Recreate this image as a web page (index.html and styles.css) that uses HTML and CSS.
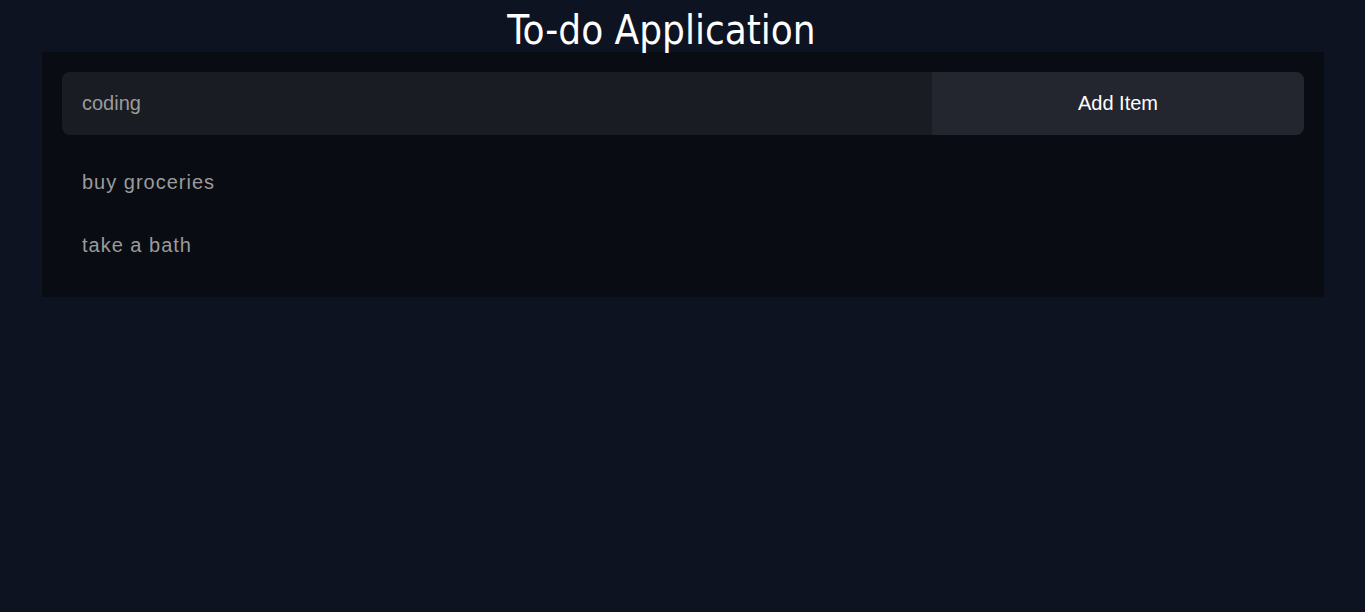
FILE: index.html
```html
<!DOCTYPE html>
<html>
<head>
<meta charset="utf-8">
<title>To-do Application</title>
<link rel="stylesheet" href="styles.css">
</head>
<body>
<h1 class="title">To-do Application</h1>
<main class="panel">
  <form class="add-row">
    <input class="add-input" type="text" value="coding">
    <button class="add-btn" type="button">Add Item</button>
  </form>
  <ul class="items">
    <li class="item">buy groceries</li>
    <li class="item">take a bath</li>
  </ul>
</main>
</body>
</html>
```
FILE: styles.css
```css
html, body {
  margin: 0;
  padding: 0;
  background: #0d1320;
  height: 100%;
}
body {
  font-family: "Liberation Sans", Arial, sans-serif;
}
.title {
  margin: 0;
  height: 52px;
  line-height: 60px;
  padding-right: 42px;
  text-align: center;
  font-family: "DejaVu Sans Condensed", "DejaVu Sans", sans-serif;
  font-weight: normal;
  font-size: 40px;
  color: #ffffff;
}
.panel {
  margin: 0 41px 0 42px;
  background: #090c13;
  padding: 20px 20px 20px;
}
.add-row {
  display: flex;
  height: 63px;
  margin: 0;
  border-radius: 8px;
  overflow: hidden;
}
.add-input {
  flex: 0 0 870px;
  border: none;
  outline: none;
  background: #1a1c23;
  color: #9b9b9b;
  font-family: "Liberation Sans", Arial, sans-serif;
  font-size: 20px;
  padding: 0 20px;
  box-sizing: border-box;
}
.add-btn {
  flex: 1;
  border: none;
  background: #23262e;
  color: #ffffff;
  font-family: "Liberation Sans", Arial, sans-serif;
  font-size: 20px;
  padding: 0;
}
.items {
  list-style: none;
  margin: 16px 0 0;
  padding: 0;
}
.item {
  height: 63px;
  line-height: 63px;
  padding-left: 20px;
  color: #9b9b9b;
  font-size: 20px;
  letter-spacing: 1px;
}
```
